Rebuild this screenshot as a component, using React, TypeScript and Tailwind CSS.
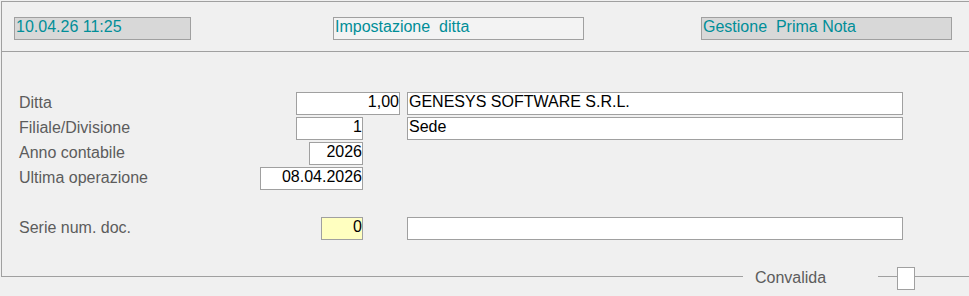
import React from "react";

const font = { fontFamily: '"Liberation Sans", Arial, sans-serif' };

type FieldProps = {
  value?: string;
  className?: string;
  align?: "left" | "right";
};

// Boxed input field as drawn by the legacy form
const Field: React.FC<FieldProps> = ({ value = "", className = "", align = "right" }) => (
  <div
    className={`h-[23px] border border-[#a0a0a0] text-[16px] leading-[18px] text-black whitespace-pre overflow-hidden ${
      align === "right" ? "text-right pr-0" : "text-left pl-px"
    } ${className}`}
  >
    {value}
  </div>
);

const Label: React.FC<{ children: React.ReactNode }> = ({ children }) => (
  <span className="w-[241px] shrink-0 text-[16px] leading-[22px] text-[#5c5c5c]">{children}</span>
);

export default function App() {
  return (
    <div className="w-[969px] h-[296px] bg-[#f0f0f0] pl-px pt-px overflow-hidden" style={font}>
      {/* Header strip */}
      <div className="h-[51px] border-t border-l border-b border-[#a0a0a0] pt-[15px] flex items-start">
        <div className="ml-[12px] w-[177px] h-[23px] border border-[#a0a0a0] bg-[#d8d8d8] pl-px text-[16px] leading-[18px] text-[#008e98]">
          10.04.26 11:25
        </div>
        <div className="ml-[142px] w-[251px] h-[23px] border border-[#a0a0a0] bg-[#f3f3f3] pl-px text-[16px] leading-[18px] text-[#008e98] whitespace-pre">
          Impostazione  ditta
        </div>
        <div className="ml-[117px] w-[251px] h-[23px] border border-[#a0a0a0] bg-[#d8d8d8] pl-px text-[16px] leading-[18px] text-[#008e98] whitespace-pre">
          Gestione  Prima Nota
        </div>
      </div>

      {/* Form body */}
      <div className="h-[215px] border-l border-[#a0a0a0] pt-[40px] pl-[17px] flex flex-col">
        <div className="flex h-[23px]">
          <Label>Ditta</Label>
          <Field value="1,00" className="ml-[36px] w-[104px] bg-white" />
          <Field value="GENESYS SOFTWARE S.R.L." align="left" className="ml-[7px] w-[496px] bg-white" />
        </div>
        <div className="flex h-[23px] mt-[2px]">
          <Label>Filiale/Divisione</Label>
          <Field value="1" className="ml-[36px] w-[67px] bg-white" />
          <Field value="Sede" align="left" className="ml-[44px] w-[496px] bg-white" />
        </div>
        <div className="flex h-[23px] mt-[2px]">
          <Label>Anno contabile</Label>
          <Field value="2026" className="ml-[49px] w-[54px] bg-white" />
        </div>
        <div className="flex h-[23px] mt-[2px]">
          <Label>Ultima operazione</Label>
          <Field value="08.04.2026" className="w-[103px] bg-white" />
        </div>
        <div className="flex h-[23px] mt-[27px]">
          <Label>Serie num. doc.</Label>
          <Field value="0" className="ml-[61px] w-[42px] bg-[#ffffc0]" />
          <Field align="left" className="ml-[44px] w-[496px] bg-white" />
        </div>
      </div>

      {/* Bottom edge with Convalida check */}
      <div className="flex items-start h-[23px]">
        <div className="flex-1 h-[10px] border-l border-b border-[#a0a0a0]" />
        <span className="w-[135px] pl-[12px] mt-[2px] text-[16px] leading-[18px] text-[#5c5c5c]">Convalida</span>
        <div className="w-[19px] h-[10px] border-b border-[#a0a0a0]" />
        <div className="w-[18px] h-[23px] border border-[#a0a0a0] bg-white" />
        <div className="w-[54px] h-[10px] border-b border-[#a0a0a0]" />
      </div>
    </div>
  );
}
